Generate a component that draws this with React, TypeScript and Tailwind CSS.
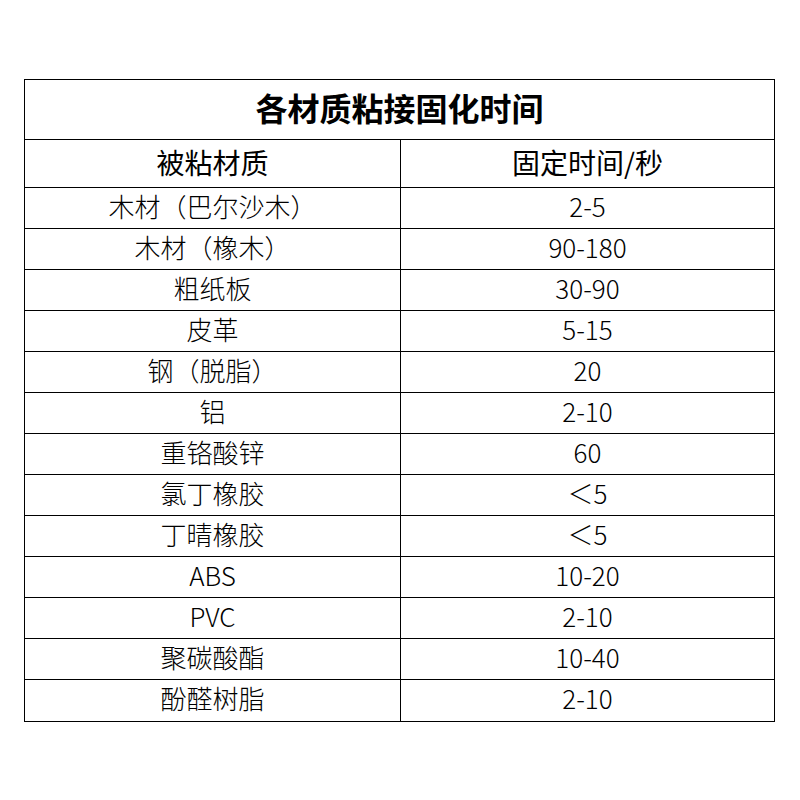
import React from "react";

const rows: [string, string][] = [
  ["木材（巴尔沙木）", "2-5"],
  ["木材（橡木）", "90-180"],
  ["粗纸板", "30-90"],
  ["皮革", "5-15"],
  ["钢（脱脂）", "20"],
  ["铝", "2-10"],
  ["重铬酸锌", "60"],
  ["氯丁橡胶", "＜5"],
  ["丁晴橡胶", "＜5"],
  ["ABS", "10-20"],
  ["PVC", "2-10"],
  ["聚碳酸酯", "10-40"],
  ["酚醛树脂", "2-10"],
];

export default function App() {
  return (
    <div
      className="w-[800px] h-[800px] bg-white pl-[24px] pt-[79px] text-black"
      style={{ fontFamily: '"Noto Sans CJK SC", "Noto Sans", sans-serif' }}
    >
      <div className="w-[751px] border border-black flex flex-col">
        <div className="h-[60px] border-b border-black flex items-center justify-center pb-[6px] text-[32px] font-bold leading-none">
          各材质粘接固化时间
        </div>
        <div className="h-[48px] border-b border-black flex text-[28px] leading-none">
          <div className="w-[376px] border-r border-black flex items-center justify-center pb-[4px]">被粘材质</div>
          <div className="flex-1 flex items-center justify-center pb-[4px]">固定时间/秒</div>
        </div>
        {rows.map(([a, b], i) => (
          <div
            key={i}
            className={`h-[41px] flex text-[26px] font-light leading-none ${i < rows.length - 1 ? "border-b border-black" : ""}`}
          >
            <div className="w-[376px] border-r border-black flex items-center justify-center pb-[5px]">{a}</div>
            <div className="flex-1 flex items-center justify-center pb-[5px]">{b}</div>
          </div>
        ))}
      </div>
    </div>
  );
}
